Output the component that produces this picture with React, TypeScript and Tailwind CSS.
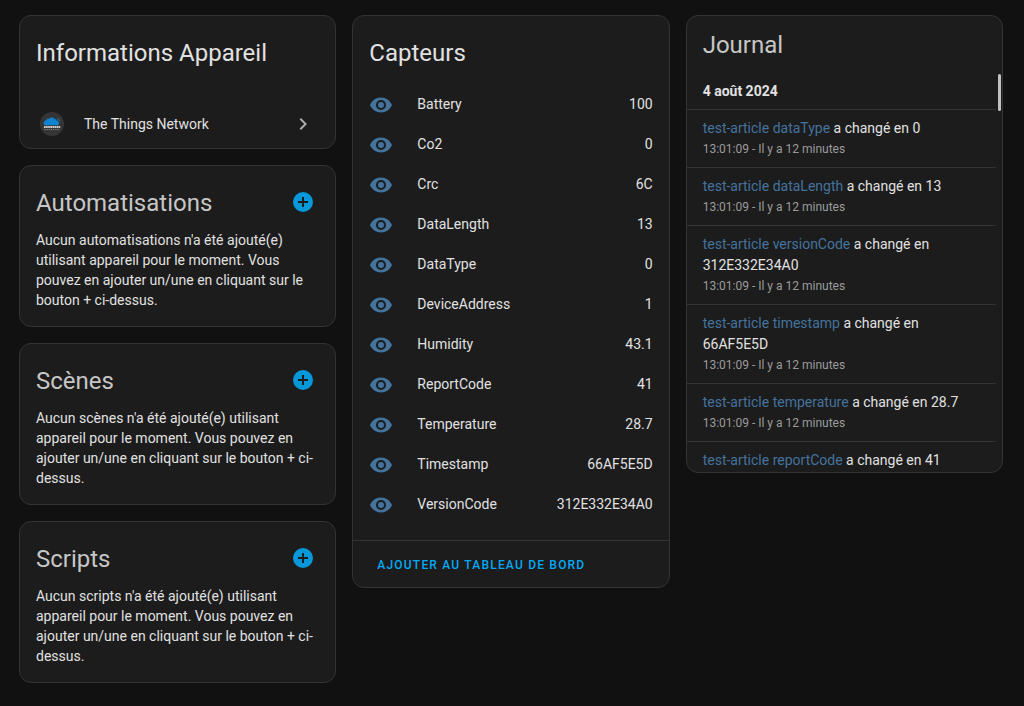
import React from 'react';

const sensors = [
  { name: 'Battery', value: '100' },
  { name: 'Co2', value: '0' },
  { name: 'Crc', value: '6C' },
  { name: 'DataLength', value: '13' },
  { name: 'DataType', value: '0' },
  { name: 'DeviceAddress', value: '1' },
  { name: 'Humidity', value: '43.1' },
  { name: 'ReportCode', value: '41' },
  { name: 'Temperature', value: '28.7' },
  { name: 'Timestamp', value: '66AF5E5D' },
  { name: 'VersionCode', value: '312E332E34A0' },
];

const entries = [
  { entity: 'dataType', value: '0', time: '13:01:09 - Il y a 12 minutes' },
  { entity: 'dataLength', value: '13', time: '13:01:09 - Il y a 12 minutes' },
  { entity: 'versionCode', value: '312E332E34A0', time: '13:01:09 - Il y a 12 minutes' },
  { entity: 'timestamp', value: '66AF5E5D', time: '13:01:09 - Il y a 12 minutes' },
  { entity: 'temperature', value: '28.7', time: '13:01:09 - Il y a 12 minutes' },
  { entity: 'reportCode', value: '41' },
];

const EyeIcon = () => (
  <svg viewBox="0 0 24 24" className="h-6 w-6 fill-[#44739e]" aria-hidden="true">
    <path d="M12,9A3,3 0 0,0 9,12A3,3 0 0,0 12,15A3,3 0 0,0 15,12A3,3 0 0,0 12,9M12,17A5,5 0 0,1 7,12A5,5 0 0,1 12,7A5,5 0 0,1 17,12A5,5 0 0,1 12,17M12,4.5C7,4.5 2.73,7.61 1,12C2.73,16.39 7,19.5 12,19.5C17,19.5 21.27,16.39 23,12C21.27,7.61 17,4.5 12,4.5Z" />
  </svg>
);

const PlusCircleIcon = () => (
  <svg viewBox="0 0 24 24" className="h-6 w-6 fill-[#0698d9]" aria-hidden="true">
    <path d="M17,13H13V17H11V13H7V11H11V7H13V11H17M12,2A10,10 0 0,0 2,12A10,10 0 0,0 12,22A10,10 0 0,0 22,12A10,10 0 0,0 12,2Z" />
  </svg>
);

const ChevronRightIcon = () => (
  <svg viewBox="0 0 24 24" className="h-6 w-6 fill-[#adadad]" aria-hidden="true">
    <path d="M8.59,16.58L13.17,12L8.59,7.41L10,6L16,12L10,18L8.59,16.58Z" />
  </svg>
);

const NetworkLogo = () => (
  <svg viewBox="0 0 24 24" className="h-6 w-6" aria-hidden="true">
    <circle cx="12" cy="12" r="12" fill="#353535" />
    <path
      d="M5.4 13.2A2 2 0 0 1 4.2 9.8A2.2 2.2 0 0 1 6.4 7.9A2.6 2.6 0 0 1 9.4 6.7A2.8 2.8 0 0 1 14 6.5A2.4 2.4 0 0 1 16.2 8.4A2.2 2.2 0 0 1 18.6 10.2A1.9 1.9 0 0 1 17.8 13.2Z"
      fill="#0d83d1"
    />
    <path d="M16.6 7.4A2.4 2.4 0 0 1 18.6 9.2M17.6 6A4.2 4.2 0 0 1 19.8 9.2" fill="none" stroke="#0d83d1" strokeWidth="0.9" opacity="0.7" />
    <path d="M4 15H20.2" stroke="#e8e8e8" strokeWidth="1.8" strokeDasharray="1.7 0.4" opacity="0.85" />
    <path d="M4.5 17.6H19.8" stroke="#c8c8c8" strokeWidth="0.9" strokeDasharray="1 1.2" opacity="0.8" />
  </svg>
);

const Card: React.FC<{ className?: string; children: React.ReactNode }> = ({ className = '', children }) => (
  <section className={`rounded-xl border border-[#333333] bg-[#1c1c1c] ${className}`}>{children}</section>
);

interface RelatedCardProps {
  title: string;
  text: string;
}

const RelatedCard: React.FC<RelatedCardProps> = ({ title, text }) => (
  <Card className="px-4 pt-3 pb-4">
    <div className="flex items-start justify-between pr-1">
      <h2 className="pt-px text-2xl leading-12 text-[#c6c6c6]">{title}</h2>
      <button type="button" aria-label={`Ajouter ${title}`} className="mt-3 cursor-pointer">
        <PlusCircleIcon />
      </button>
    </div>
    <p className="mt-[3px]">{text}</p>
  </Card>
);

const SensorsCard = () => (
  <Card>
    <h2 className="px-4 pt-[13px] pb-[7px] text-2xl leading-12">Capteurs</h2>
    <ul className="pr-4 pb-4 pl-4">
      {sensors.map(({ name, value }) => (
        <li key={name} className="flex h-10 items-center">
          <span className="pt-0.5">
            <EyeIcon />
          </span>
          <span className="ml-6 flex-1">{name}</span>
          <span>{value}</span>
        </li>
      ))}
    </ul>
    <div className="border-t border-[#333333] px-4 pt-1.5 pb-1">
      <button
        type="button"
        className="h-9 cursor-pointer px-2 text-xs font-medium tracking-widest text-[#03a9f4] uppercase"
      >
        Ajouter au tableau de bord
      </button>
    </div>
  </Card>
);

const LogbookCard = () => (
  <Card className="relative flex h-[458px] flex-col overflow-hidden">
    <h2 className="px-4 pt-[5px] text-2xl leading-12 text-[#c6c6c6]">Journal</h2>
    <div className="mr-[6px] flex-1 overflow-hidden pt-1">
      <h3 className="border-b border-[#333333] px-4 py-2 font-bold">4 août 2024</h3>
      <ul>
        {entries.map(({ entity, value, time }) => (
          <li key={entity} className="border-b border-[#333333] px-4 py-2">
            <p className="leading-[21px]">
              <a href="#" className="text-[#44739e]">test-article {entity}</a> a changé en {value}
            </p>
            {time && <p className="text-xs leading-5 text-[#9b9b9b]">{time}</p>}
          </li>
        ))}
      </ul>
    </div>
    {/* scroll thumb */}
    <div className="absolute top-[58px] right-px h-[37px] w-[3px] rounded-sm bg-[#c1c1c1]" />
  </Card>
);

export default function App() {
  return (
    <main className="grid min-h-screen grid-cols-3 items-start gap-4 bg-[#111111] pt-[15px] pr-[21px] pb-4 pl-[19px] font-['Roboto',sans-serif] text-sm leading-5 text-[#e1e1e1]">
      <div className="flex flex-col gap-4">
        <Card className="pt-[13px]">
          <h2 className="px-4 text-2xl leading-12">Informations Appareil</h2>
          <a href="#" className="mt-[23px] flex h-12 items-center pr-5 pl-5">
            <NetworkLogo />
            <span className="ml-5 flex-1">The Things Network</span>
            <ChevronRightIcon />
          </a>
        </Card>
        <RelatedCard
          title="Automatisations"
          text="Aucun automatisations n'a été ajouté(e) utilisant appareil pour le moment. Vous pouvez en ajouter un/une en cliquant sur le bouton + ci-dessus."
        />
        <RelatedCard
          title="Scènes"
          text="Aucun scènes n'a été ajouté(e) utilisant appareil pour le moment. Vous pouvez en ajouter un/une en cliquant sur le bouton + ci-dessus."
        />
        <RelatedCard
          title="Scripts"
          text="Aucun scripts n'a été ajouté(e) utilisant appareil pour le moment. Vous pouvez en ajouter un/une en cliquant sur le bouton + ci-dessus."
        />
      </div>
      <SensorsCard />
      <LogbookCard />
    </main>
  );
}
